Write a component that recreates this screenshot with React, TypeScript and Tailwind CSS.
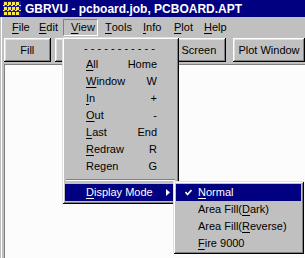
import React from "react";

const bevelOut =
  "shadow-[inset_-1px_-1px_0_#000,inset_1px_1px_0_#fff,inset_-2px_-2px_0_#808080,inset_2px_2px_0_#dfdfdf]";
const menuFrame =
  "shadow-[inset_1px_1px_0_#dfdfdf,inset_-1px_-1px_0_#000,inset_2px_2px_0_#fff,inset_-2px_-2px_0_#808080]";

const menuBar = [
  { u: "F", rest: "ile", w: "w-[27px]" },
  { u: "E", rest: "dit", w: "w-[31px]" },
  { u: "V", rest: "iew", w: "w-[35px]", open: true },
  { u: "T", rest: "ools", w: "w-[38px]" },
  { u: "I", rest: "nfo", w: "w-[31px]" },
  { u: "P", rest: "lot", w: "w-[30px]" },
  { u: "H", rest: "elp", w: "w-[35px]" },
];

const viewItems = [
  { u: "A", rest: "ll", key: "Home" },
  { u: "W", rest: "indow", key: "W" },
  { u: "I", rest: "n", key: "+" },
  { u: "O", rest: "ut", key: "-" },
  { u: "L", rest: "ast", key: "End" },
  { u: "R", rest: "edraw", key: "R" },
  { u: "", rest: "Regen", key: "G" },
];

function U({ c }: { c: string }) {
  return <span className="underline decoration-1 underline-offset-[2px]">{c}</span>;
}

function AppIcon() {
  return (
    <svg width="18" height="15" viewBox="0 0 18 15">
      <rect width="18" height="15" fill="#1818b0" />
      {[1, 6, 11].map((y) =>
        [1, 5, 9, 13].map((x) => (
          <rect key={`${x}-${y}`} x={x} y={y} width="3" height="3" fill="#f8e840" />
        ))
      )}
      <path d="M0 4.5h18M0 9.5h18" stroke="#f8e840" strokeWidth="1" strokeDasharray="2 2" />
    </svg>
  );
}

export default function App() {
  return (
    <div className="relative flex h-[258px] w-[305px] flex-col overflow-hidden bg-[#c0c0c0] font-['Liberation_Sans',Arial,sans-serif] text-[11px] text-black">
      {/* title bar */}
      <div className="flex h-[17px] items-center gap-[4px] bg-[#000080] pl-[3px]">
        <AppIcon />
        <span className="text-[12px] font-bold text-white">GBRVU - pcboard.job, PCBOARD.APT</span>
      </div>

      <div className="ml-px flex flex-1 flex-col border-l border-white pl-px">
        {/* menu bar */}
        <div className="flex h-[19px] items-end pl-[2px]">
          {menuBar.map((m) => (
            <div
              key={m.u}
              className={`${m.w} flex h-[17px] items-center pl-[7px] ${
                m.open ? "border-t border-l border-b border-r border-t-[#808080] border-l-[#808080] border-b-white border-r-white pl-[6px]" : ""
              }`}
            >
              <U c={m.u} />
              {m.rest}
            </div>
          ))}
        </div>

        {/* toolbar */}
        <div className="flex h-[28px] items-start pt-[2px] pl-[1px] text-[11px]">
          <button className={`h-[24px] w-[47px] ${bevelOut}`}>Fill</button>
          <button className={`ml-[4px] h-[24px] w-[94px] ${bevelOut}`} />
          <button className={`ml-[4px] h-[24px] w-[75px] pr-[2px] ${bevelOut}`}>Plot Screen</button>
          <button className={`ml-[7px] h-[24px] w-[72px] shrink-0 ${bevelOut}`}>Plot Window</button>
        </div>

        {/* client area */}
        <div className="ml-px flex-1 border-t border-l border-[#808080] bg-[#fcfcfc]" />
      </div>

      {/* View menu */}
      <div className={`absolute left-[62px] top-[37px] w-[117px] bg-[#c0c0c0] p-[3px] ${menuFrame}`}>
        <div className="flex h-[16px] items-center justify-center pr-[2px] leading-none">- - - - - - - - - - -</div>
        {viewItems.map((it) => (
          <div key={it.rest} className="flex h-[17px] items-center justify-between pl-[21px] pr-[19px]">
            <span>
              {it.u && <U c={it.u} />}
              {it.rest}
            </span>
            <span>{it.key}</span>
          </div>
        ))}
        <div className="flex h-[9px] flex-col justify-center px-px">
          <div className="h-px bg-[#808080]" />
          <div className="h-px bg-white" />
        </div>
        <div className="flex h-[17px] items-center justify-between bg-[#000080] pl-[21px] pr-[6px] text-white">
          <span>
            <U c="D" />
            isplay Mode
          </span>
          <svg width="4" height="7" viewBox="0 0 4 7">
            <path d="M0 0L4 3.5L0 7Z" fill="#fff" />
          </svg>
        </div>
      </div>

      {/* Display Mode submenu */}
      <div className={`absolute left-[173px] top-[181px] w-[131px] bg-[#c0c0c0] px-[3px] pt-[3px] pb-[2px] ${menuFrame}`}>
        <div className="relative flex h-[17px] items-center bg-[#000080] pl-[22px] text-white">
          <svg className="absolute left-[9px] top-[5px]" width="7" height="7" viewBox="0 0 7 7">
            <path d="M0.5 3L2.5 5.5L6.5 1" stroke="#fff" strokeWidth="1.6" fill="none" />
          </svg>
          <U c="N" />
          ormal
        </div>
        <div className="flex h-[17px] items-center pl-[22px]">
          Area Fill(<U c="D" />ark)
        </div>
        <div className="flex h-[17px] items-center pl-[22px]">
          Area Fill(<U c="R" />everse)
        </div>
        <div className="flex h-[17px] items-center pl-[22px]">
          <U c="F" />
          ire 9000
        </div>
      </div>
    </div>
  );
}
